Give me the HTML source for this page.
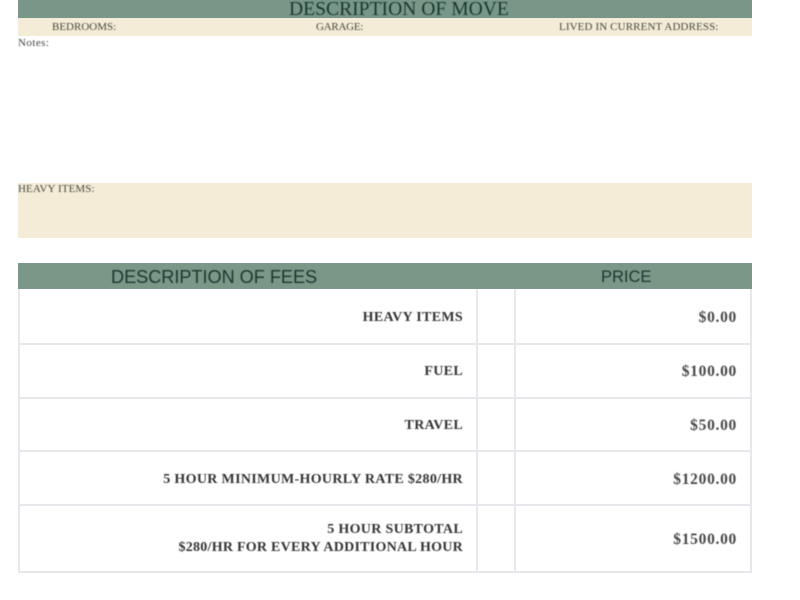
<!DOCTYPE html>
<html>
<head>
<meta charset="utf-8">
<style>
html,body{margin:0;padding:0;background:#fff;width:800px;height:600px;overflow:hidden}
.r{position:absolute}
.t{position:absolute;white-space:nowrap;font-family:"Liberation Serif",serif;filter:blur(.4px)}
.b{font-weight:bold;font-size:14px;color:#333335;letter-spacing:.32px;text-align:right;right:337px;line-height:18px}
.p{font-size:15.5px;font-weight:bold;color:#48484b;letter-spacing:.7px;text-align:right;right:63px;line-height:18px}
.s{font-size:11px;color:#444a40;line-height:12px}
.l{position:absolute;background:#e8e7eb}
</style>
</head>
<body>
<div class="r" style="left:18px;top:0;width:734px;height:18px;background:#789789"></div>
<div class="r" style="left:18px;top:18px;width:734px;height:18px;background:#f4ecd6"></div>
<div class="t" style="left:289px;top:-1px;font-size:19.6px;line-height:22px;color:#1a382e">DESCRIPTION OF MOVE</div>
<div class="t s" style="left:52px;top:21px">BEDROOMS:</div>
<div class="t s" style="left:316px;top:21px;letter-spacing:-.25px">GARAGE:</div>
<div class="t s" style="left:559px;top:21px;letter-spacing:.12px">LIVED IN CURRENT ADDRESS:</div>
<div class="t s" style="left:18px;top:37px;color:#444446;letter-spacing:.45px">Notes:</div>

<div class="r" style="left:18px;top:183px;width:734px;height:55px;background:#f4ecd6"></div>
<div class="t s" style="left:18px;top:183px;letter-spacing:.1px">HEAVY ITEMS:</div>

<div class="r" style="left:18px;top:263px;width:734px;height:26px;background:#7a9788"></div>
<div class="t" style="left:111px;top:266px;font-family:'Liberation Sans',sans-serif;font-size:18.1px;line-height:22px;color:#1a382e">DESCRIPTION OF FEES</div>
<div class="t" style="left:601px;top:267px;font-family:'Liberation Sans',sans-serif;font-size:16.5px;line-height:20px;color:#1a382e">PRICE</div>

<div class="l" style="left:18px;top:289px;width:2px;height:284px"></div>
<div class="l" style="left:476px;top:289px;width:2px;height:284px"></div>
<div class="l" style="left:514px;top:289px;width:2px;height:284px"></div>
<div class="l" style="left:750px;top:289px;width:2px;height:284px"></div>
<div class="l" style="left:18px;top:343px;width:734px;height:2px"></div>
<div class="l" style="left:18px;top:397px;width:734px;height:2px"></div>
<div class="l" style="left:18px;top:450px;width:734px;height:2px"></div>
<div class="l" style="left:18px;top:504px;width:734px;height:2px"></div>
<div class="l" style="left:18px;top:571px;width:734px;height:2px"></div>

<div class="t b" style="top:309px">HEAVY ITEMS</div>
<div class="t b" style="top:363px">FUEL</div>
<div class="t b" style="top:417px">TRAVEL</div>
<div class="t b" style="top:471px">5 HOUR MINIMUM-HOURLY RATE $280/HR</div>
<div class="t b" style="top:521px">5 HOUR SUBTOTAL</div>
<div class="t b" style="top:539px;letter-spacing:.26px">$280/HR FOR EVERY ADDITIONAL HOUR</div>

<div class="t p" style="top:309px">$0.00</div>
<div class="t p" style="top:363px">$100.00</div>
<div class="t p" style="top:417px">$50.00</div>
<div class="t p" style="top:471px">$1200.00</div>
<div class="t p" style="top:531px">$1500.00</div>
</body>
</html>
